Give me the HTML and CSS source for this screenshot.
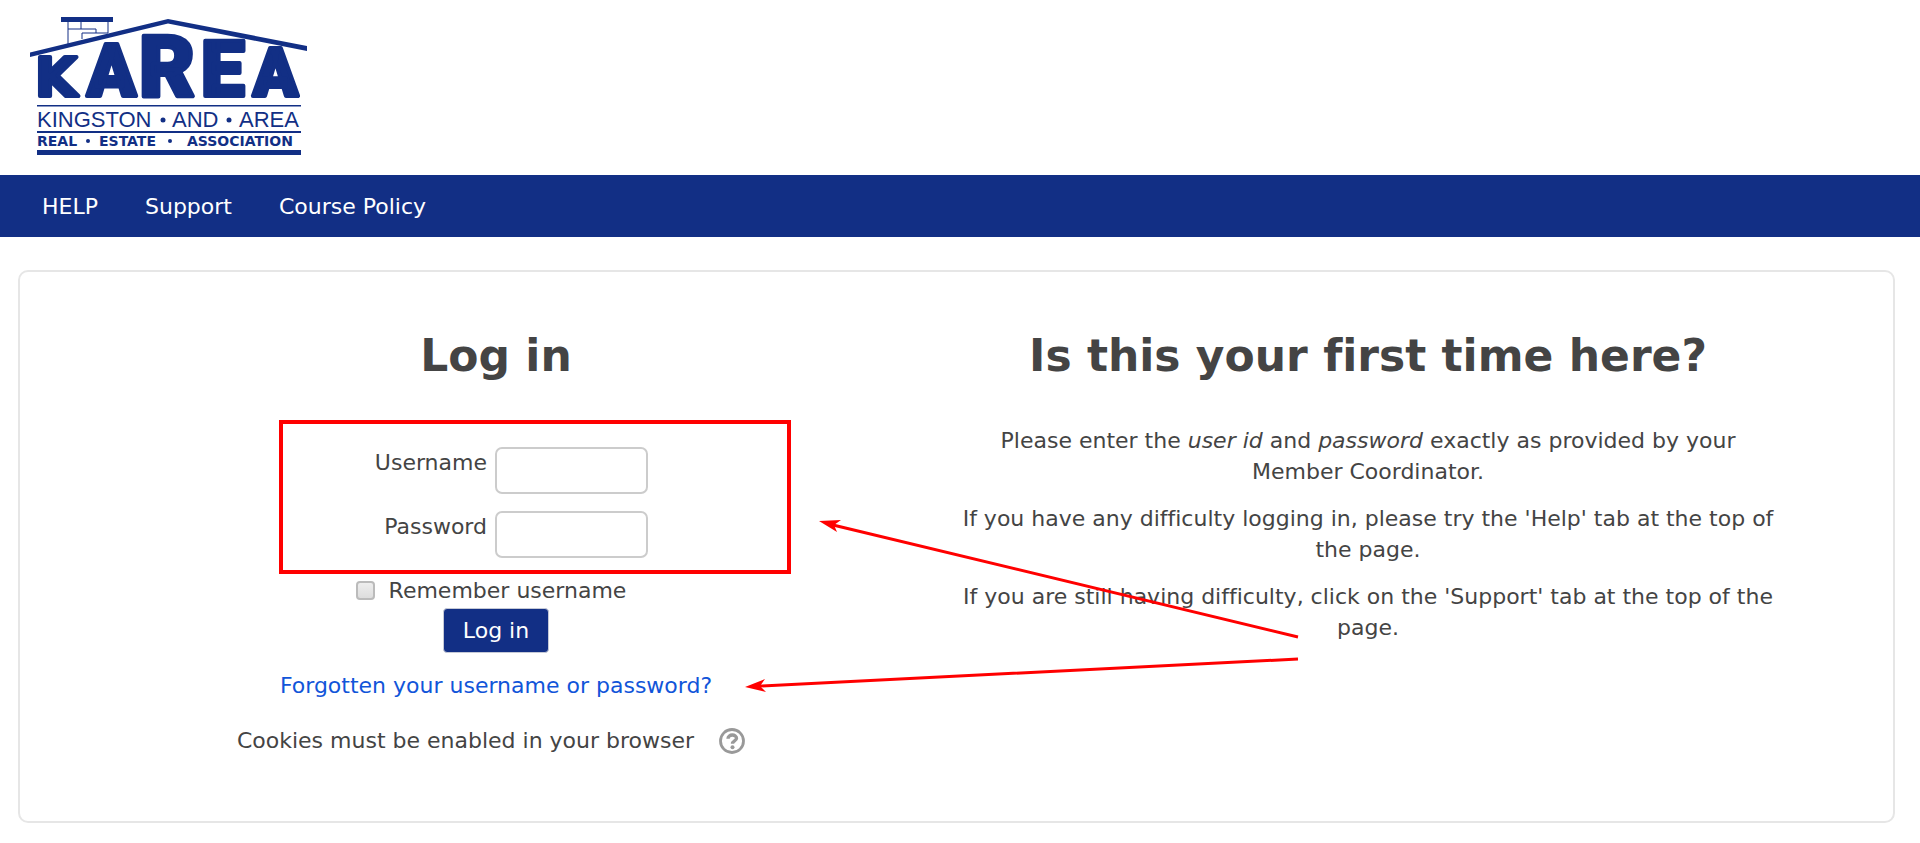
FILE: index.html
```html
<!DOCTYPE html>
<html lang="en">
<head>
    <meta charset="UTF-8">
    <meta name="viewport" content="width=device-width, initial-scale=1.0">
    <title>KAREA: Log in to the site</title>
    <link rel="stylesheet" href="styles.css">
</head>
<body>
    <header class="site-header">
        <a href="#" class="logo">
            <svg width="280" height="142" viewBox="0 0 280 142" role="img" aria-label="KAREA">
                <!-- chimney -->
                <path class="logo-fill" d="M31 0h52v5H31z"/>
                <path class="logo-line" d="M38 5v22M51 5v7M78 5v11M38 12h28v4M52 22v-6h26"/>
                <!-- roof -->
                <path class="logo-fill" d="M0 35.500L138 2l139 27v5L138 6.500 0 40z"/>
                <text class="logo-name" y="79"><tspan class="size-k" x="5">K</tspan><tspan class="size-a" x="57">A</tspan><tspan class="size-r" x="109">R</tspan><tspan class="size-e" x="171">E</tspan><tspan class="size-a2" x="223">A</tspan></text>
                <path class="logo-fill" d="M7 88h264v1.500H7zM7 114h264v2H7zM7 133h264v5H7z"/>
                <text class="logo-place" y="110"><tspan x="7">KINGSTON</tspan><tspan x="142">AND</tspan><tspan x="209">AREA</tspan></text>
                <text class="logo-assoc" y="129"><tspan x="7">REAL</tspan><tspan x="69">ESTATE</tspan><tspan x="157">ASSOCIATION</tspan></text>
                <circle class="logo-fill" cx="133" cy="103" r="2.500"/>
                <circle class="logo-fill" cx="199" cy="103" r="2.500"/>
                <circle class="logo-fill" cx="58" cy="124" r="2"/>
                <circle class="logo-fill" cx="140" cy="124" r="2"/>
            </svg>
        </a>
    </header>

    <nav class="navbar">
        <a href="#">HELP</a>
        <a href="#">Support</a>
        <a href="#">Course Policy</a>
    </nav>

    <main class="login-box">
        <section class="login-panel">
            <h2>Log in</h2>
            <form class="login-form">
                <div class="form-row">
                    <label for="username">Username</label>
                    <input type="text" id="username" name="username">
                </div>
                <div class="form-row">
                    <label for="password">Password</label>
                    <input type="password" id="password" name="password">
                </div>
                <div class="remember">
                    <input type="checkbox" id="rememberusername" name="rememberusername">
                    <label for="rememberusername">Remember username</label>
                </div>
                <button type="submit">Log in</button>
            </form>
            <a href="#" class="forgot">Forgotten your username or password?</a>
            <div class="cookies">
                Cookies must be enabled in your browser
                <a href="#" class="help-icon" aria-label="Help with cookies">
                    <svg width="26" height="26" viewBox="0 0 26 26">
                        <circle cx="13" cy="13" r="11.500" fill="none" stroke="#999" stroke-width="2.800"/>
                        <path d="M9 10.800c0-5 8.500-4.800 8.500-.6 0 2.800-4 2.600-4 5.600" fill="none" stroke="#999" stroke-width="3.400"/>
                        <circle cx="13.500" cy="19.300" r="2" fill="#999"/>
                    </svg>
                </a>
            </div>
        </section>

        <section class="signup-panel">
            <h2>Is this your first time here?</h2>
            <p>Please enter the <em>user id</em> and <em>password</em> exactly as provided by your Member Coordinator.</p>
            <p>If you have any difficulty logging in, please try the 'Help' tab at the top of the page.</p>
            <p>If you are still having difficulty, click on the 'Support' tab at the top of the page.</p>
        </section>

        <!-- callouts for the fields and the reset link -->
        <svg class="callouts" width="1300" height="552" viewBox="0 0 1300 552" aria-hidden="true">
            <rect x="261" y="150" width="508" height="150" fill="none" stroke="#f00" stroke-width="4"/>
            <path d="M813 253l465 112M740 414l538-27" fill="none" stroke="#f00" stroke-width="3"/>
            <path d="M799 249l22-1-7 5 3 7zM725 415l20-8-5 7 6 6z" fill="#f00"/>
        </svg>
    </main>
</body>
</html>
```

FILE: styles.css
```css
* {
    box-sizing: border-box;
}

body {
    margin: 0;
    background: #fff;
    color: #444;
    font-family: Verdana, "DejaVu Sans", sans-serif;
    font-size: 22px;
    line-height: 31px;
    font-variant-ligatures: none;
}

a {
    color: #1155d9;
    text-decoration: none;
}

a:hover {
    text-decoration: underline;
}

.site-header {
    padding: 17px 30px 16px;
}

.logo {
    display: block;
    width: 280px;
}

.logo svg {
    display: block;
}

.logo-fill,
.logo svg text {
    fill: #122f85;
}

.logo-line {
    fill: none;
    stroke: #122f85;
    stroke-width: 1px;
}

.logo-name {
    font-family: Roboto, sans-serif;
    font-weight: 900;
    stroke: #122f85;
    stroke-width: 4px;
    stroke-linejoin: round;
}

.size-k {
    font-family: "DejaVu Sans", sans-serif;
    font-size: 54px;
}

.size-a {
    font-size: 72px;
}

.size-r {
    font-size: 86px;
}

.size-e {
    font-size: 78px;
}

.size-a2 {
    font-size: 66px;
}

.logo-place {
    font-family: "Liberation Sans", sans-serif;
    font-size: 22px;
}

.logo-assoc {
    font-family: "DejaVu Sans", sans-serif;
    font-size: 14px;
    font-weight: bold;
}

.navbar {
    display: flex;
    gap: 47px;
    padding: 16px 42px 15px;
    background: #122f85;
}

.navbar a {
    color: #fff;
}

.login-box {
    position: relative;
    display: grid;
    grid-template-columns: 1fr 1fr;
    gap: 52px;
    margin: 33px 25px 20px 18px;
    padding: 54px 115px 65px 66px;
    border: 2px solid #e6e6e6;
    border-radius: 10px;
    text-align: center;
}

h2 {
    margin: 0 0 39px;
    font-size: 44px;
    line-height: 60px;
}

.login-form {
    display: flex;
    flex-direction: column;
    align-items: center;
    padding-top: 22px;
}

.form-row {
    display: grid;
    grid-template-columns: 1fr 1fr;
    column-gap: 8px;
    width: 100%;
    margin-bottom: 17px;
    padding-right: 10px;
}

.form-row label {
    text-align: right;
}

.form-row input {
    width: 153px;
    height: 47px;
    padding: 6px 10px;
    border: 2px solid #ccc;
    border-radius: 7px;
    background: #fff;
    font: inherit;
}

.remember {
    display: flex;
    align-items: center;
    gap: 14px;
    margin-bottom: 2px;
    padding-right: 10px;
}

.remember input {
    appearance: none;
    width: 19px;
    height: 19px;
    margin: 0;
    border: 2px solid #bbb;
    border-radius: 4px;
    background: linear-gradient(#eee, #ddd);
}

button {
    height: 45px;
    padding: 0 19px;
    border: 1px solid #c5c9d6;
    border-radius: 4px;
    background: #122f85;
    color: #fff;
    font: inherit;
    cursor: pointer;
}

.forgot {
    display: block;
    margin-top: 17px;
}

.cookies {
    display: flex;
    justify-content: center;
    align-items: center;
    gap: 25px;
    margin-top: 24px;
    padding-right: 10px;
}

.help-icon svg {
    display: block;
}

.signup-panel p {
    margin: 0 0 16px;
}

.callouts {
    position: absolute;
    top: 0;
    left: 0;
    pointer-events: none;
}
```
